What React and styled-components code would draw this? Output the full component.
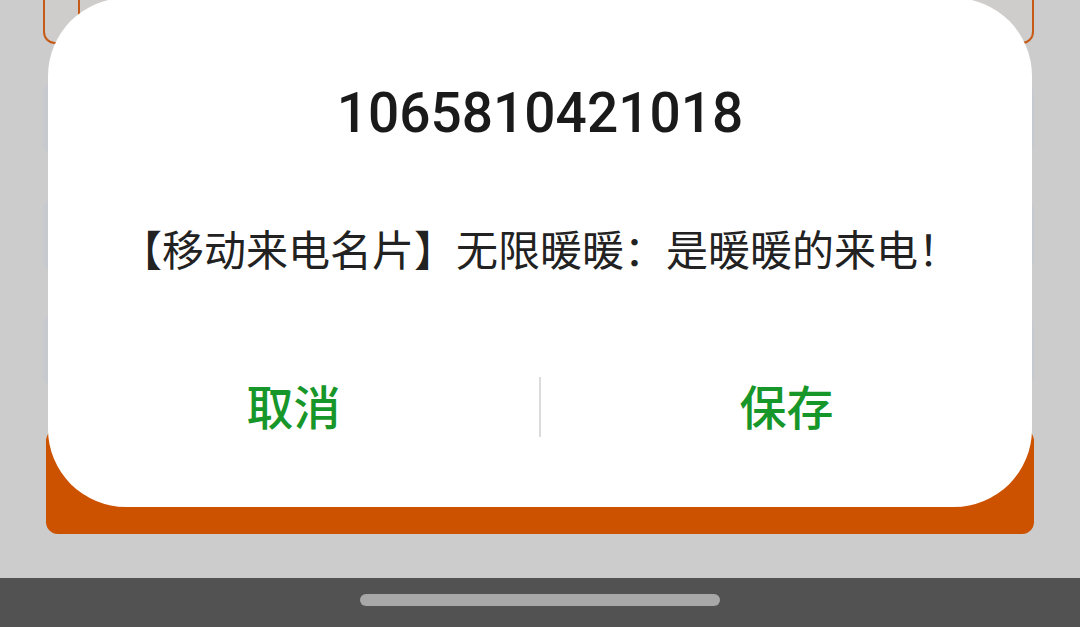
import React from "react";
import styled, { createGlobalStyle } from "styled-components";

const GlobalStyle = createGlobalStyle`
  html, body {
    margin: 0;
    padding: 0;
    background: #cccccc;
  }
  * {
    box-sizing: border-box;
  }
`;

const App = () => {
  return (
    <>
      <GlobalStyle />
      <Page>
        <Screen>
          <Behind>
            <TopBox>
              <InnerBox />
            </TopBox>
            <ListCard />
            <ListCard />
            <ListCard />
            <OrangeCard />
          </Behind>

          <Dialog>
            <Number>1065810421018</Number>
            <Message>【移动来电名片】无限暖暖：是暖暖的来电！</Message>
            <Actions>
              <Action>取消</Action>
              <Divider />
              <Action>保存</Action>
            </Actions>
          </Dialog>
        </Screen>
        <NavBar>
          <Handle />
        </NavBar>
      </Page>
    </>
  );
};

export default App;

const Page = styled.div`
  width: 1080px;
  height: 627px;
  display: flex;
  flex-direction: column;
  overflow: hidden;
  background: #cccccc;
`;

const Screen = styled.div`
  position: relative;
  flex: 1;
  overflow: hidden;
`;

const Behind = styled.div`
  display: flex;
  flex-direction: column;
  padding: 0 46px 0 43px;
  margin-top: -28px;
`;

const TopBox = styled.div`
  height: 72px;
  border: 2px solid #c65a17;
  border-radius: 12px;
  background: #cfcdcb;
  padding: 0 0 8px 33px;
  display: flex;
  align-items: flex-end;
`;

const InnerBox = styled.div`
  width: 200px;
  height: 50px;
  border: 2px solid #c65a17;
  border-radius: 10px;
`;

const ListCard = styled.div`
  height: 74px;
  margin-top: 38px;
  border-radius: 12px;
  background: #c6c9cd;

  & + & {
    margin-top: 42px;
  }
`;

const OrangeCard = styled.div`
  height: 105px;
  margin: 41px 0 0 3px;
  border-radius: 12px;
  background: #cc5200;
`;

const Dialog = styled.div`
  position: absolute;
  left: 48px;
  top: -2px;
  width: 984px;
  height: 509px;
  background: #ffffff;
  border-radius: 78px;
  display: flex;
  flex-direction: column;
  align-items: center;
  padding-top: 82px;
`;

const Number = styled.div`
  font-family: Roboto, "Noto Sans", sans-serif;
  font-weight: 500;
  font-size: 55px;
  line-height: 66px;
  color: #1a1a1a;
`;

const Message = styled.div`
  margin-top: 77px;
  font-family: "Noto Sans CJK SC", "Noto Sans", sans-serif;
  font-size: 42px;
  line-height: 50px;
  color: #222222;
  white-space: nowrap;
`;

const Actions = styled.div`
  margin-top: 104px;
  width: 100%;
  height: 60px;
  display: flex;
  align-items: center;
`;

const Action = styled.div`
  flex: 1;
  text-align: center;
  padding-bottom: 5px;
  font-family: "Noto Sans CJK SC", "Noto Sans", sans-serif;
  font-weight: 500;
  font-size: 47px;
  line-height: 55px;
  color: #17962a;
`;

const Divider = styled.div`
  width: 2px;
  height: 60px;
  background: #dcdcdc;
`;

const NavBar = styled.div`
  height: 49px;
  background: #525252;
  display: flex;
  justify-content: center;
  padding-top: 16px;
`;

const Handle = styled.div`
  width: 360px;
  height: 12px;
  border-radius: 6px;
  background: #a8a8a8;
`;
